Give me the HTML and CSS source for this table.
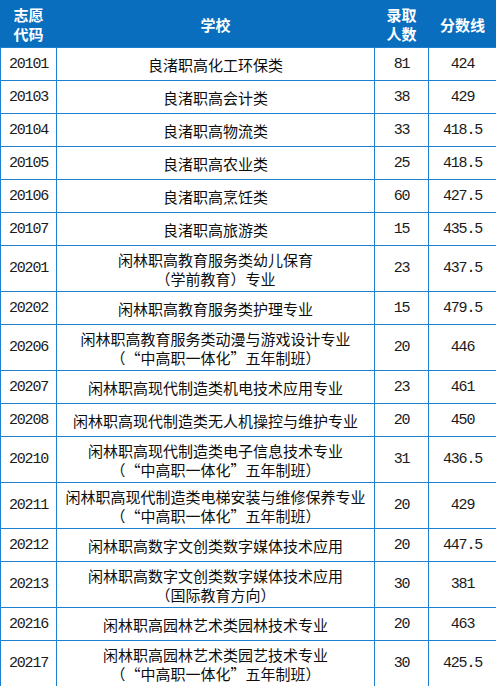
FILE: index.html
```html
<!DOCTYPE html>
<html lang="zh-CN">
<head>
<meta charset="utf-8">
<link rel="stylesheet" href="styles.css">
</head>
<body>
<table class="score-table">
  <colgroup>
    <col class="c-code"><col class="c-school"><col class="c-count"><col class="c-score">
  </colgroup>
  <thead>
    <tr class="head">
      <th>志愿<br>代码</th>
      <th>学校</th>
      <th>录取<br>人数</th>
      <th>分数线</th>
    </tr>
  </thead>
  <tbody>
    <tr class="one"><td class="num">20101</td><td class="name">良渚职高化工环保类</td><td class="num">81</td><td class="num">424</td></tr>
    <tr class="one"><td class="num">20103</td><td class="name">良渚职高会计类</td><td class="num">38</td><td class="num">429</td></tr>
    <tr class="one"><td class="num">20104</td><td class="name">良渚职高物流类</td><td class="num">33</td><td class="num">418.5</td></tr>
    <tr class="one"><td class="num">20105</td><td class="name">良渚职高农业类</td><td class="num">25</td><td class="num">418.5</td></tr>
    <tr class="one"><td class="num">20106</td><td class="name">良渚职高烹饪类</td><td class="num">60</td><td class="num">427.5</td></tr>
    <tr class="one"><td class="num">20107</td><td class="name">良渚职高旅游类</td><td class="num">15</td><td class="num">435.5</td></tr>
    <tr class="two"><td class="num">20201</td><td class="name">闲林职高教育服务类幼儿保育<br>（学前教育）专业</td><td class="num">23</td><td class="num">437.5</td></tr>
    <tr class="one"><td class="num">20202</td><td class="name">闲林职高教育服务类护理专业</td><td class="num">15</td><td class="num">479.5</td></tr>
    <tr class="two"><td class="num">20206</td><td class="name">闲林职高教育服务类动漫与游戏设计专业<br>（<span class="ql">“</span>中高职一体化<span class="qr">”</span>五年制班）</td><td class="num">20</td><td class="num">446</td></tr>
    <tr class="one"><td class="num">20207</td><td class="name">闲林职高现代制造类机电技术应用专业</td><td class="num">23</td><td class="num">461</td></tr>
    <tr class="one"><td class="num">20208</td><td class="name">闲林职高现代制造类无人机操控与维护专业</td><td class="num">20</td><td class="num">450</td></tr>
    <tr class="two"><td class="num">20210</td><td class="name">闲林职高现代制造类电子信息技术专业<br>（<span class="ql">“</span>中高职一体化<span class="qr">”</span>五年制班）</td><td class="num">31</td><td class="num">436.5</td></tr>
    <tr class="two"><td class="num">20211</td><td class="name">闲林职高现代制造类电梯安装与维修保养专业<br>（<span class="ql">“</span>中高职一体化<span class="qr">”</span>五年制班）</td><td class="num">20</td><td class="num">429</td></tr>
    <tr class="one"><td class="num">20212</td><td class="name">闲林职高数字文创类数字媒体技术应用</td><td class="num">20</td><td class="num">447.5</td></tr>
    <tr class="two"><td class="num">20213</td><td class="name">闲林职高数字文创类数字媒体技术应用<br>（国际教育方向）</td><td class="num">30</td><td class="num">381</td></tr>
    <tr class="one"><td class="num">20216</td><td class="name">闲林职高园林艺术类园林技术专业</td><td class="num">20</td><td class="num">463</td></tr>
    <tr class="two"><td class="num">20217</td><td class="name">闲林职高园林艺术类园艺技术专业<br>（<span class="ql">“</span>中高职一体化<span class="qr">”</span>五年制班）</td><td class="num">30</td><td class="num">425.5</td></tr>
  </tbody>
</table>
</body>
</html>
```
FILE: styles.css
```css
html, body {
  margin: 0;
  padding: 0;
  background: #ffffff;
}
.score-table {
  width: 496px;
  border-collapse: collapse;
  table-layout: fixed;
  font-family: "Noto Sans CJK SC", "Noto Sans", sans-serif;
  font-size: 15px;
  color: #111111;
}
.c-code { width: 56px; }
.c-school { width: 318px; }
.c-count { width: 54px; }
.c-score { width: 68px; }
.score-table th,
.score-table td {
  border: 1px solid #1c7fd0;
  padding: 0;
  text-align: center;
  vertical-align: middle;
  line-height: 19px;
}
.head th {
  background: #0a6ebe;
  color: #ffffff;
  font-weight: bold;
  font-size: 15px;
  line-height: 19px;
  height: 46px;
  border-left-color: #0a6ebe;
  border-right-color: #0a6ebe;
  border-top-color: #0a6ebe;
}
tr.one td { height: 32px; }
tr.two td { height: 45px; }
.score-table td.name {
  color: #0d0d0d;
}
.ql,
.qr {
  display: inline-block;
  width: 1em;
}
.ql { text-align: right; }
.qr { text-align: left; }
.score-table td.num {
  font-family: "Liberation Mono", "DejaVu Sans Mono", monospace;
  font-size: 15px;
  letter-spacing: -1.2px;
  color: #1a1a1a;
}
```
